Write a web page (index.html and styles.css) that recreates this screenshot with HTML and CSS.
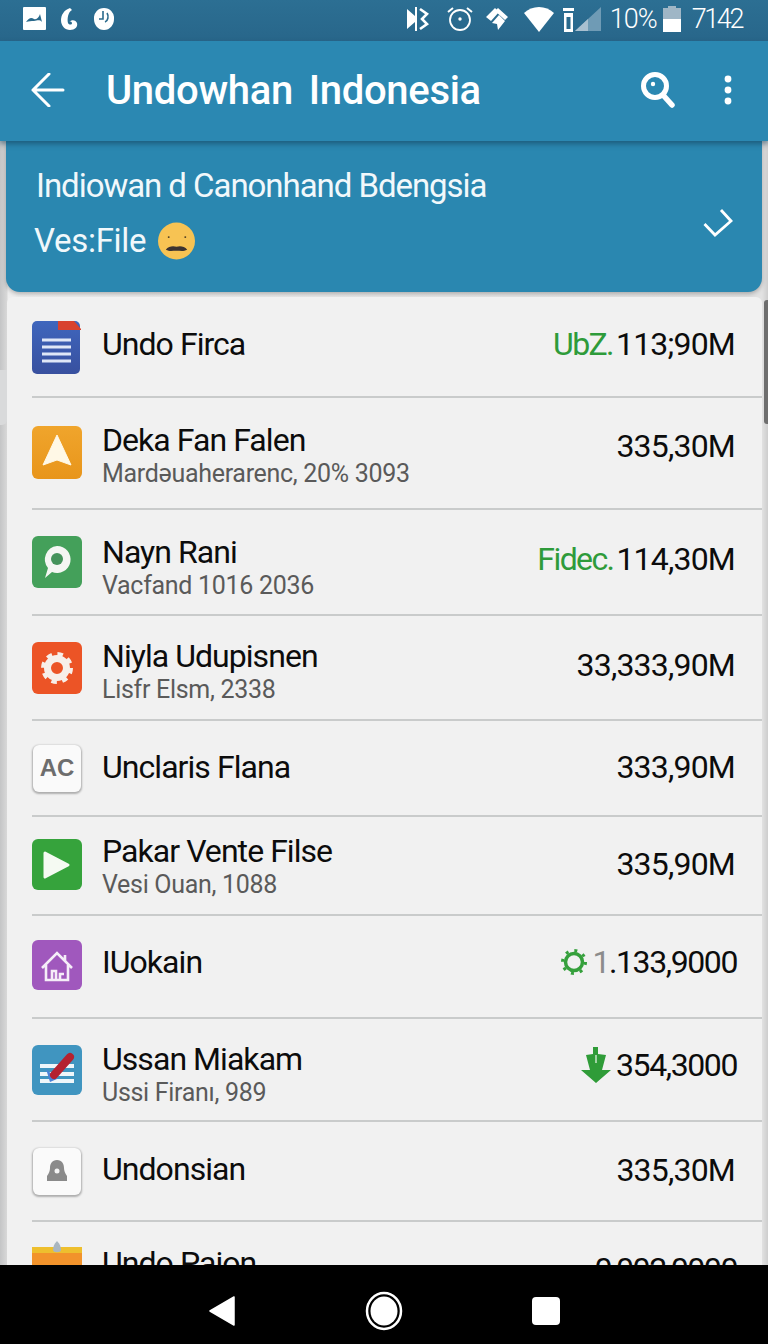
FILE: index.html
```html
<!DOCTYPE html>
<html lang="id">
<head>
<meta charset="utf-8">
<title>Undowhan Indonesia</title>
<link rel="stylesheet" href="styles.css">
</head>
<body>
<div class="phone">
  <div class="status">
    <div class="status-left">
      <svg class="si" width="24" height="24" viewBox="0 0 24 24"><rect width="23" height="23" rx="1" fill="#fff"/><path d="M3 15c3-4 5-5 8-3 3 1 5-2 6-5l2 8c-3-3-5-1-8-1s-5 0-8 1z" fill="#2a6a8c"/></svg>
      <svg class="si" width="18" height="24" viewBox="0 0 18 24"><path d="M10 1C4 3 1 8 1 13c0 6 4 10 9 10 5 0 8-3 7-7-1-3-5-4-8-1 1-1 3 0 3 1 0 2-3 2-4 0C7 12 8 5 12 3z" fill="#fff"/></svg>
      <svg class="si third" width="20" height="24" viewBox="0 0 20 24"><path d="M10 1a10 10 0 0 1 10 11c0 6-4 11-10 11S0 18 0 12A10 10 0 0 1 10 1z" fill="#fff"/><path d="M9 4v8H5M13 6c2 3 1 8-2 9" fill="none" stroke="#2a6a8c" stroke-width="1.6"/></svg>
    </div>
    <div class="status-right">
      <svg class="bt" width="22" height="26" viewBox="0 0 22 26"><path d="M0 3l8 7V1h2v24H8v-9l-8 7z" fill="#fff"/><path d="M13 3l7 5-5 5 5 5-7 5" fill="none" stroke="#fff" stroke-width="2.6"/></svg>
      <svg class="al" width="26" height="26" viewBox="0 0 26 26"><circle cx="13" cy="14" r="10" fill="none" stroke="#fff" stroke-width="1.8"/><circle cx="13" cy="13" r="1.7" fill="#fff"/><path d="M1 6l5-4M20 2l5 4" stroke="#fff" stroke-width="2" fill="none"/></svg>
      <svg class="dm" width="24" height="26" viewBox="0 0 24 26"><path d="M0 11l9-9 4 4-8 9zM12 2l10 9-3 3L9 5zM6 17l7-8 6 6-7 9-1-6z" fill="#fff"/></svg>
      <svg class="wf" width="30" height="26" viewBox="0 0 30 26"><path d="M0 7c8-8 22-8 30 0L15 26z" fill="#fff"/></svg>
      <svg class="sg" width="40" height="26" viewBox="0 0 40 26"><path d="M2 2h11v3H2zM3 7h9v19H3z" fill="#fff"/><rect x="5.500" y="11" width="4" height="12" fill="#2a6a8c"/><path d="M14 25L40 1v24z" fill="#6f9bb5"/><path d="M14 25l13-12v12z" fill="#a9c0d0"/></svg>
      <span class="pct">10%</span>
      <svg class="bat" width="18" height="26" viewBox="0 0 18 26"><path d="M5 0h8v2h5v24H0V2h5z" fill="#9fb6c6"/><rect y="13" width="18" height="13" fill="#fff"/></svg>
      <span class="time">7142</span>
    </div>
  </div>
  <header class="appbar">
    <svg class="back" width="34" height="34" viewBox="0 0 34 34"><path d="M32 17H2M18 1L2 17l16 16" fill="none" stroke="#fff" stroke-width="3" stroke-linecap="round" stroke-linejoin="round"/></svg>
    <h1 class="title">Undowhan Indonesia</h1>
    <svg class="search" width="34" height="36" viewBox="0 0 34 36"><circle cx="14" cy="14" r="11.500" fill="none" stroke="#fff" stroke-width="5"/><circle cx="12" cy="12" r="2.200" fill="#fff"/><path d="M22 23l9 10" stroke="#fff" stroke-width="5.500" stroke-linecap="round"/></svg>
    <svg class="more" width="10" height="30" viewBox="0 0 10 30"><circle cx="5" cy="4" r="3.400" fill="#fff"/><circle cx="5" cy="15" r="3.400" fill="#fff"/><circle cx="5" cy="26" r="3.400" fill="#fff"/></svg>
  </header>
  <section class="banner">
    <div class="banner-text">
      <div class="banner-line">Indiowan d Canonhand Bdengsia</div>
      <div class="banner-sub">Ves:File
        <svg class="emoji" width="37" height="40" viewBox="0 0 38 40"><circle cx="19" cy="20" r="19" fill="#f7c353"/><circle cx="11" cy="16" r="1" fill="#4a3a20"/><circle cx="28" cy="16" r="1" fill="#4a3a20"/><path d="M8 29c3-4 8-4 11-3 3-1 8-1 11 3-4 2-7 1-11 1s-7 1-11-1z" fill="#3c3330"/></svg>
      </div>
    </div>
    <svg class="chev" width="30" height="28" viewBox="0 0 30 28"><path d="M1.500 15l10.500 11L28 12 18 1" fill="none" stroke="#fff" stroke-width="2.800"/></svg>
  </section>
  <main class="list">
    <div class="row">
      <svg class="ic" width="50" height="54" viewBox="0 0 50 54"><defs><linearGradient id="gb" x1="0" y1="0" x2="0" y2="1"><stop offset="0" stop-color="#3f66bd"/><stop offset="1" stop-color="#38509f"/></linearGradient></defs><rect y="1" width="48" height="53" rx="5" fill="url(#gb)"/><path d="M26 1h16l7 8v1H26z" fill="#d8422f"/><path d="M10 20h29M10 27h29M10 34h29M10 41h29" stroke="#dfe7f7" stroke-width="3"/></svg>
      <div class="tx"><div class="name">Undo Firca</div></div>
      <div class="val"><span class="green">UbZ.</span> 113;90M</div>
    </div>
    <div class="row">
      <svg class="ic" width="50" height="54" viewBox="0 0 50 54"><defs><linearGradient id="go" x1="0" y1="0" x2="0" y2="1"><stop offset="0" stop-color="#f0a52c"/><stop offset="1" stop-color="#e8951b"/></linearGradient></defs><rect y="1" width="50" height="53" rx="6" fill="url(#go)"/><path d="M25 10l14 30-14-5-14 5z" fill="#fff8e6" stroke="#fff8e6" stroke-linejoin="round"/></svg>
      <div class="tx"><div class="name">Deka Fan Falen</div><div class="sub">Mardəuaherarenc, 20% 3093</div></div>
      <div class="val">335,30M</div>
    </div>
    <div class="row">
      <svg class="ic" width="50" height="52" viewBox="0 0 50 52"><rect width="50" height="52" rx="6" fill="#44a05a"/><path d="M25 10a13.500 13.500 0 1 1-5 26l-7 6 3-10a13.500 13.500 0 0 1 9-22z" fill="#f4f6f2"/><circle cx="25" cy="23" r="6" fill="#44935a"/></svg>
      <div class="tx"><div class="name">Nayn Rani</div><div class="sub">Vacfand 1016 2036</div></div>
      <div class="val"><span class="green">Fidec.</span> 114,30M</div>
    </div>
    <div class="row">
      <svg class="ic" width="50" height="52" viewBox="0 0 50 52"><rect width="50" height="52" rx="6" fill="#ec5426"/><circle cx="25" cy="26" r="9.500" fill="none" stroke="#f7efe9" stroke-width="7"/><circle cx="25" cy="26" r="14" fill="none" stroke="#f7efe9" stroke-width="4" stroke-dasharray="5.500 5.500"/></svg>
      <div class="tx"><div class="name">Niyla Udupisnen</div><div class="sub">Lisfr Elsm, 2338</div></div>
      <div class="val">33,333,90M</div>
    </div>
    <div class="row">
      <div class="ic tile"><span class="ac">AC</span></div>
      <div class="tx"><div class="name">Unclaris Flana</div></div>
      <div class="val">333,90M</div>
    </div>
    <div class="row">
      <svg class="ic" width="50" height="51" viewBox="0 0 50 51"><rect width="50" height="51" rx="6" fill="#36a33c"/><path d="M13 14l23 12-23 12z" fill="#f5faf2" stroke="#f5faf2" stroke-width="3" stroke-linejoin="round"/></svg>
      <div class="tx"><div class="name">Pakar Vente Filse</div><div class="sub">Vesi Ouan, 1088</div></div>
      <div class="val">335,90M</div>
    </div>
    <div class="row">
      <svg class="ic" width="50" height="50" viewBox="0 0 50 50"><rect width="50" height="50" rx="6" fill="#a058bd"/><path d="M10 28l15-15 15 15M14 25v15h22V25M20 40v-9h4v9M28 40v-6h4M33 15v6" fill="none" stroke="#f5edf8" stroke-width="2.600"/></svg>
      <div class="tx"><div class="name">IUokain</div></div>
      <div class="val val-wide"><svg class="mini" width="26" height="28" viewBox="0 0 26 28"><circle cx="13" cy="14" r="8.500" fill="none" stroke="#35a03c" stroke-width="3.500"/><circle cx="13" cy="14" r="11.500" fill="none" stroke="#35a03c" stroke-width="3" stroke-dasharray="3 6.030"/></svg> <span class="fade">1</span>.133,9000</div>
    </div>
    <div class="row">
      <svg class="ic" width="50" height="50" viewBox="0 0 50 50"><rect width="50" height="50" rx="6" fill="#4095c0"/><path d="M8 21h34M8 29h34M8 36h34" stroke="#eef6fa" stroke-width="4"/><path d="M14 24l11 10-7 3z" fill="#4a82d8"/><path d="M22 30L38 12" stroke="#b52230" stroke-width="8" stroke-linecap="round"/></svg>
      <div class="tx"><div class="name">Ussan Miakam</div><div class="sub">Ussi Firanı, 989</div></div>
      <div class="val val-wide"><svg class="mini" width="30" height="36" viewBox="0 0 30 36"><path d="M12 0h5v7l8 1-4 15h9L15 36 0 23h9L5 8l7-1z" fill="#2f9c38"/><path d="M15 8v8" stroke="#c9e6c9" stroke-width="1.500"/></svg> 354,3000</div>
    </div>
    <div class="row">
      <div class="ic tile"><svg width="24" height="24" viewBox="0 0 24 24"><path d="M12 1c5 0 7 4 7 8 0 3 1 5 3 8v5H2v-5c2-3 3-5 3-8 0-4 2-8 7-8z" fill="#8a8a8a"/><circle cx="12" cy="12" r="2.500" fill="#f4f4f4"/></svg></div>
      <div class="tx"><div class="name">Undonsian</div></div>
      <div class="val">335,30M</div>
    </div>
    <div class="row">
      <svg class="ic" width="50" height="54" viewBox="0 0 50 54"><rect y="6" width="50" height="48" rx="3" fill="#f2932b"/><rect y="6" width="50" height="6" fill="#eebf2e"/><path d="M25 0c3 3 4 6 4 9s-8 3-8 0 1-6 4-9z" fill="#a9b6c0"/></svg>
      <div class="tx"><div class="name">Undo Paion</div></div>
      <div class="val val-wide">0,002,0000</div>
    </div>
  </main>
  <nav class="navbar">
    <svg width="28" height="30" viewBox="0 0 28 30"><path d="M26 1v28L2 15z" fill="#fff" stroke="#fff" stroke-width="1.500" stroke-linejoin="round"/></svg>
    <svg width="38" height="40" viewBox="0 0 38 40"><ellipse cx="19" cy="20" rx="17" ry="18" fill="none" stroke="#fff" stroke-width="2.500"/><ellipse cx="19" cy="20" rx="13.500" ry="14.500" fill="#fff"/></svg>
    <svg width="28" height="28" viewBox="0 0 28 28"><rect width="28" height="28" rx="4" fill="#fff"/></svg>
  </nav>
  <div class="scrollbar"></div>
  <div class="edge-glow"></div>
</div>
</body>
</html>
```
FILE: styles.css
```css
* { box-sizing: border-box; }
html, body { margin: 0; padding: 0; }
body { width: 768px; height: 1344px; overflow: hidden; font-family: Roboto, "Liberation Sans", sans-serif; }
.phone { position: relative; width: 768px; height: 1344px; display: flex; flex-direction: column; background: linear-gradient(90deg, #c4c5c6 0, #d8d8d8 7px, #eeeeee 8px, #e2e2e2 762px, #cdcdcd 768px); overflow: hidden; }

.status { flex: 0 0 41px; display: flex; justify-content: space-between; align-items: center; background: linear-gradient(180deg, #2c6f93, #28668a); color: #fff; padding: 0 26px 3px 23px; }
.status-left, .status-right { display: flex; align-items: center; }
.status-left { gap: 13px; }
.status-left .si { display: block; }
.status-left .third { margin-left: 3px; }
.bt { margin-right: 18px; }
.al { margin-right: 13px; }
.dm { margin-right: 14px; }
.wf { margin-right: 7px; }
.sg { margin-right: 9px; }
.pct { font-size: 27px; letter-spacing: -1px; font-weight: 300; }
.bat { margin: 0 11px 0 6px; }
.time { font-size: 27px; letter-spacing: -2.4px; font-weight: 300; }

.appbar { flex: 0 0 100px; display: flex; align-items: center; background: #2b88b2; color: #fff; padding: 0 35px 2px 31px; box-shadow: 0 3px 5px rgba(20, 60, 85, .55); position: relative; z-index: 2; }
.title { margin: 0 0 0 41px; flex: 1; font-size: 40px; font-weight: 500; word-spacing: 6px; white-space: nowrap; letter-spacing: -.3px; }
.search { margin-right: 48px; }

.banner { flex: 0 0 151px; margin: 0 6px; display: flex; justify-content: space-between; background: #2a87b0; color: #f1f8fb; border-radius: 0 0 14px 14px; padding: 23px 29px 0 28px; box-shadow: 0 2px 4px rgba(0, 0, 0, .25); }
.banner-line { font-size: 33px; line-height: 44px; padding-left: 2px; white-space: nowrap; letter-spacing: -1.05px; }
.banner-sub { font-size: 33px; line-height: 48px; margin-top: 9px; display: flex; align-items: center; gap: 12px; letter-spacing: -.3px; }
.emoji { display: block; }
.chev { margin-top: 45px; }

.list { flex: 0 0 968px; margin: 5px 6px 0 7px; background: #f1f1f1; border-radius: 6px 6px 0 0; overflow: hidden; display: grid; grid-template-rows: 101px 112px 106px 105px 96px 99px 103px 103px 100px 60px; }
.row { display: flex; align-items: center; margin-left: 25px; padding-right: 27px; border-bottom: 2px solid #c9cbcb; }
.row:last-child { border-bottom: 0; align-items: flex-start; padding-top: 19px; }
.ic { flex: none; display: block; }
.tile { width: 48px; height: 47px; margin: 0 1px; background: #fafafa; border-radius: 6px; box-shadow: 0 1px 2px 1px rgba(0, 0, 0, .28); display: flex; align-items: center; justify-content: center; }
.ac { font-size: 24px; font-weight: 700; color: #6d6d6d; font-family: "Liberation Sans", sans-serif; }
.tx { flex: 1; margin-left: 20px; min-width: 0; }
.name { font-size: 32px; line-height: 38px; color: #0c0c0c; white-space: nowrap; letter-spacing: -.95px; }
.sub { font-size: 25px; line-height: 30px; color: #5a5a5a; white-space: nowrap; letter-spacing: -.3px; }
.val { font-size: 32px; line-height: 38px; color: #0c0c0c; white-space: nowrap; display: flex; align-items: center; gap: 5px; letter-spacing: -.8px; }
.val-wide { margin-right: -2px; letter-spacing: -1.4px; }
.green { color: #2e9b3a; letter-spacing: -1.6px; margin-right: -2px; }
.fade { color: #8c8c8c; margin-right: -5px; }
.mini { display: block; }

/* per-row vertical optical offsets */
.row:nth-child(1) .tx { margin-bottom: 6px; }
.row:nth-child(1) .val { margin-bottom: 6px; }
.row:nth-child(2) .ic { margin-bottom: 3px; }
.row:nth-child(2) .tx { margin-top: 4px; }
.row:nth-child(2) .val { margin-bottom: 14px; }
.row:nth-child(3) .tx { margin-top: 10px; }
.row:nth-child(3) .val { margin-bottom: 6px; }
.row:nth-child(4) .tx { margin-top: 6px; }
.row:nth-child(4) .val { margin-bottom: 6px; }
.row:nth-child(5) .tx { margin-bottom: 2px; }
.row:nth-child(5) .val { margin-bottom: 2px; }
.row:nth-child(6) .ic { margin-bottom: 3px; }
.row:nth-child(6) .val { margin-bottom: 4px; }
.row:nth-child(7) .ic { margin-bottom: 4px; }
.row:nth-child(7) .tx { margin-bottom: 10px; }
.row:nth-child(7) .val { margin-bottom: 10px; }
.row:nth-child(8) .tx { margin-top: 9px; }
.row:nth-child(8) .val { margin-bottom: 10px; }
.row:nth-child(9) .tx { margin-bottom: 4px; }
.row:nth-child(9) .val { margin-bottom: 2px; }
.row:nth-child(10) .tx { margin-top: 3px; }
.row:nth-child(10) .val { margin-top: 9px; }

.navbar { flex: 0 0 79px; background: #000; display: flex; justify-content: center; align-items: center; gap: 129px; position: relative; z-index: 2; padding: 12px 0 0 0; }

.scrollbar { position: absolute; top: 300px; right: 0; width: 4px; height: 124px; background: #6e6e6e; border-radius: 3px 0 0 3px; }
.edge-glow { position: absolute; top: 370px; left: 0; width: 7px; height: 55px; background: #d9dadb; border-radius: 0 0 5px 0; }
```
